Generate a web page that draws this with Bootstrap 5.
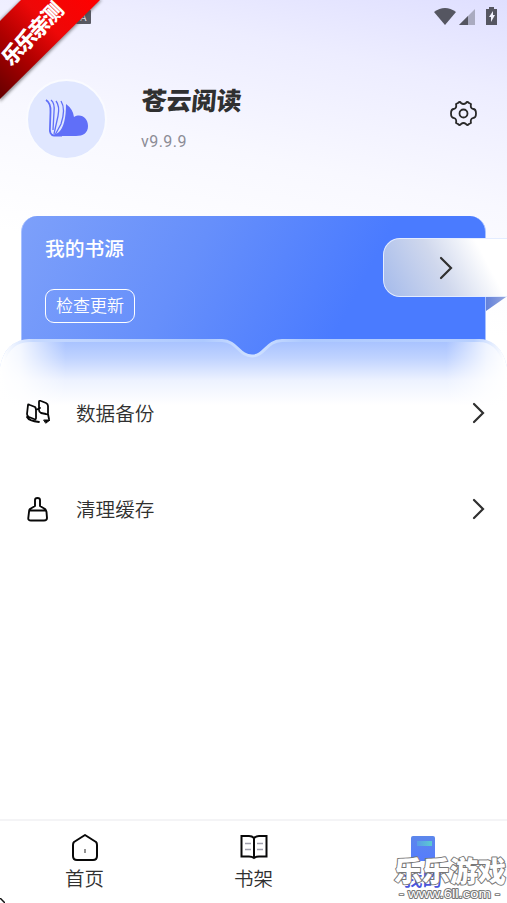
<!DOCTYPE html>
<html lang="zh-CN">
<head>
<meta charset="utf-8">
<meta name="viewport" content="width=device-width, initial-scale=1">
<title>苍云阅读</title>
<link href="https://cdn.jsdelivr.net/npm/bootstrap@5.3.0/dist/css/bootstrap.min.css" rel="stylesheet">
<style>
body{font-family:Roboto,"Noto Sans CJK SC",sans-serif;color:#303030;background:#fff}
svg{display:block;flex:none}
.phone{width:507px;height:903px;background:linear-gradient(192deg,#dfdfff 0,#ededff 90px,#f8f8ff 205px,#fff 330px)}
.status{height:33px;padding:7px 8px 0 0}
.profile{height:183px;padding:46px 30px 0 26px}
.avatar{width:81px;height:81px;background:#e0e7ff;border:2px solid #fafbff}
.names{margin-left:34px;padding-top:6px}
.app-name{font-size:25px;line-height:34px;font-weight:900;transform:skewX(-5deg);transform-origin:left bottom;margin-left:-1px}
.version{font-size:16px;line-height:20px;color:#8c8c96;margin-top:13px;letter-spacing:.45px}
.gear{margin-top:21px}
.source-card{height:140px;margin:0 21px;padding:19px 0 0 23px;border-radius:16px 16px 0 0;background:linear-gradient(118deg,#7da0fa 0,#668ffb 36%,#4a7bff 70%);border:1px solid #a9c2ff;border-top:0;border-bottom:0}
.source-title{font-size:19.8px;line-height:30px;font-weight:500;color:#fff}
.update{width:90px;height:34px;padding:0;margin-top:24px;border:1px solid #fff;border-radius:9px;color:#fff;font-size:17px;font-weight:350;line-height:31px}
.enter{left:383px;top:22px;width:124px;height:59px;border:1px solid #e3ecff;border-right:0;border-radius:17px 0 0 17px;background:linear-gradient(62deg,#a4baeb 0,#d0d8ed 45%,#fff 79%);padding-left:55px}
.fold{left:486px;top:81px}
.wave{left:0;top:119px}
.entries{padding-top:9px;z-index:1}
.entry{height:96px;padding:0 22px 0 25px;font-size:19.6px;font-weight:350}
.entry-label{margin-left:25px;padding-top:3px}
.tabs{height:84px;border-top:2px solid #f4f4f6;padding-top:11px}
.tab-item{width:169px;font-size:19.5px;font-weight:350;line-height:28px}
.tab-item svg{margin-top:1px;margin-bottom:5px}
.tab-item.active-tab{color:#4856dc;font-weight:500}
.ribbon{left:0;top:0}
.site-mark{left:388px;top:850px}
.corner{left:0;top:898px}
</style>
</head>
<body>
<main class="phone position-relative overflow-hidden d-flex flex-column">
  <div class="status d-flex justify-content-end">
    <svg width="65" height="20" viewBox="0 0 65 20"><path d="M0 5Q11-3 22 5L11 18Z" fill="#555661"/><path d="M41 2V18H25Z" fill="#aaabc0"/><path d="M34 9V18H25Z" fill="#555661"/><path d="M55 0h5v2h3v16H52V2h3Z" fill="#555661"/><path d="M59 4l-4 6h2v5l4-7h-2Z" fill="#f3f3ff"/></svg>
  </div>
  <header class="profile d-flex">
    <div class="avatar rounded-circle d-flex">
      <svg width="76" height="76" viewBox="28 81 76 76"><path d="M66 104Q73 109 74 117C81 113 88 118 88 126C88 133 83 136 76 136H53L59 132Q66 125 66 104Z" fill="#606ff8"/><g fill="none" stroke="#606ff8"><path d="M46 100Q51 103 50.500 112L50 127Q49 135 54 135.500H62" stroke-width="1.800"/><path d="M51 100Q55 103 54 112L53 130M56 101Q60 106 58 116L54 134M61 101Q66 109 61 124L55 135" stroke-width="1.300"/></g></svg>
    </div>
    <div class="names">
      <div class="app-name">苍云阅读</div>
      <div class="version">v9.9.9</div>
    </div>
    <svg class="gear ms-auto" width="27" height="27" viewBox="0 0 27 27" fill="none" stroke="#292929" stroke-width="1.800" stroke-linejoin="round"><path d="M8 3Q10 1 11 3Q13.500 5 16 3Q17 1 19 3L21 4Q20 8 23 9Q26 9 26 13.500Q26 18 23 18Q20 19 21 23L19 24Q17 26 16 24Q13.500 22 11 24Q10 26 8 24L6 23Q7 19 4 18Q1 18 1 13.500Q1 9 4 9Q7 8 6 4Z"/><circle cx="13.500" cy="13.500" r="4"/></svg>
  </header>
  <section class="source-wrap position-relative">
    <div class="source-card">
      <div class="source-title">我的书源</div>
      <button class="update btn">检查更新</button>
    </div>
    <svg class="fold position-absolute" width="21" height="15" viewBox="0 0 21 15"><defs><linearGradient id="foldTint"><stop stop-color="#6381da"/><stop offset="1" stop-color="#95a6dd"/></linearGradient></defs><path d="M0 0H20L0 14Z" fill="url(#foldTint)"/></svg>
    <div class="enter position-absolute d-flex align-items-center"><svg width="14" height="24" viewBox="0 0 14 24" fill="none" stroke="#303030" stroke-width="2.200" stroke-linecap="round"><path d="M2 2L12 12L2 22"/></svg></div>
    <svg class="wave position-absolute" width="507" height="70" viewBox="0 0 507 70">
      <defs>
        <linearGradient id="haze" x2="0" y2="1"><stop stop-color="#a6c1ff"/><stop offset=".28" stop-color="#c0d3ff"/><stop offset=".62" stop-color="#edf2ff"/><stop offset="1" stop-color="#fff"/></linearGradient>
        <linearGradient id="sides"><stop stop-color="#fff"/><stop offset=".04" stop-color="#fff" stop-opacity=".85"/><stop offset=".13" stop-color="#fff" stop-opacity="0"/><stop offset=".88" stop-color="#fff" stop-opacity="0"/><stop offset=".96" stop-color="#fff" stop-opacity=".8"/><stop offset="1" stop-color="#fff"/></linearGradient>
        <linearGradient id="rim"><stop stop-color="#fff"/><stop offset=".06" stop-color="#c6d9ff"/><stop offset=".4" stop-color="#adc9ff"/><stop offset=".5" stop-color="#d1e2ff"/><stop offset=".6" stop-color="#adc9ff"/><stop offset=".94" stop-color="#b8d0ff"/><stop offset="1" stop-color="#fff"/></linearGradient>
      </defs>
      <path d="M0 32Q5 5 29 5H222C237 5 239 21 252 21C265 21 266 5 282 5H479Q501 5 507 32V70H0Z" fill="url(#haze)"/>
      <path d="M0 32Q5 5 29 5H222C237 5 239 21 252 21C265 21 266 5 282 5H479Q501 5 507 32V70H0Z" fill="url(#sides)"/>
      <path d="M3 27Q10 6 29 5.500H222C237 6 239 21 252 21C265 21 266 6 282 5.500H479Q497 5.500 504 27" fill="none" stroke="url(#rim)" stroke-width="3"/>
    </svg>
  </section>
  <section class="entries position-relative">
    <div class="entry d-flex align-items-center">
      <svg width="26" height="26" viewBox="25 401 26 26" fill="none" stroke="#080808" stroke-width="1.800" stroke-linejoin="round" stroke-linecap="round"><path d="M28 406Q28 405 30 406L35 408Q36 409 36 411V419Q36 421 34 420L29 418Q27 417 27 415ZM39 403Q39 401 41 402L46 404Q48 405 48 407V414Q48 416 46 415L41 414Q39 413 39 411ZM36 411L40 409M27 418Q29 422 39 423M48 415L49 420"/><path d="M44 421H50L46 424Z" fill="#080808" stroke-width="1"/></svg>
      <span class="entry-label">数据备份</span>
      <svg class="ms-auto" width="14" height="24" viewBox="0 0 14 24" fill="none" stroke="#303030" stroke-width="2.200" stroke-linecap="round"><path d="M3 3L12 12L3 21"/></svg>
    </div>
    <div class="entry d-flex align-items-center">
      <svg width="26" height="26" viewBox="25 496 26 26" fill="none" stroke="#080808" stroke-width="1.900" stroke-linejoin="round"><path d="M35 506V500Q35 498 37.500 498Q40 498 40 500V506L45 509Q46 510 46.500 512L47 518Q47 520.500 44 520.500H31Q28 520.500 28.300 518L29 512Q29 510 30 509ZM29 510.500H46"/></svg>
      <span class="entry-label">清理缓存</span>
      <svg class="ms-auto" width="14" height="24" viewBox="0 0 14 24" fill="none" stroke="#303030" stroke-width="2.200" stroke-linecap="round"><path d="M3 3L12 12L3 21"/></svg>
    </div>
  </section>
  <nav class="tabs mt-auto d-flex">
    <div class="tab-item d-flex flex-column align-items-center">
      <svg width="28" height="28" viewBox="0 0 28 28" fill="none" stroke="#080808" stroke-width="2" stroke-linejoin="round"><path d="M14 2L25 9Q26 10 26 12V23Q26 27 22 27H6Q2 27 2 23V12Q2 10 3 9Z"/><path d="M14 16V20" stroke="#777" stroke-width="1.600"/></svg>首页
    </div>
    <div class="tab-item d-flex flex-column align-items-center">
      <svg width="28" height="28" viewBox="0 0 28 28" fill="none" stroke="#080808" stroke-width="2"><path d="M14 5Q12 3 9 3H1.500V23.500H9Q12 23.500 14 25Q16 23.500 19 23.500H26.500V3H19Q16 3 14 5V25"/><path d="M5 10.500H11M5 16.500H11M17 10.500H23M17 16.500H23" stroke="#a0a0ad" stroke-width="1.500"/></svg>书架
    </div>
    <div class="tab-item active-tab d-flex flex-column align-items-center">
      <svg width="28" height="28" viewBox="0 0 28 28"><defs><linearGradient id="book" x2="0" y2="1"><stop stop-color="#5c87eb"/><stop offset="1" stop-color="#557bff"/></linearGradient><linearGradient id="mint"><stop stop-color="#5a9ce8"/><stop offset="1" stop-color="#5bcbd0"/></linearGradient></defs><rect x="2" y="3" width="24" height="27" rx="2" fill="url(#book)"/><rect x="8" y="8" width="15" height="5" fill="url(#mint)"/></svg>我的
    </div>
  </nav>
  <svg class="ribbon position-absolute" width="112" height="108" viewBox="0 0 112 108">
    <defs><linearGradient id="red" x1="0" y1="1" x2="1" y2="0"><stop stop-color="#650000"/><stop offset=".35" stop-color="#b00000"/><stop offset=".62" stop-color="#ee0808"/><stop offset="1" stop-color="#f00"/></linearGradient><filter id="shade" x="-20%" y="-20%" width="140%" height="140%"><feGaussianBlur stdDeviation="1.500"/></filter></defs>
    <rect x="76" y="10" width="15" height="14" rx="1" fill="#595963"/><text x="80" y="21" font-family="Roboto" font-size="10" fill="#eef">A</text>
    <path d="M21 0H102L0 102V20Z" fill="#444" opacity=".55" filter="url(#shade)"/>
    <path d="M21 0H100L0 99V21Z" fill="url(#red)"/>
    <text transform="translate(11 67) rotate(-46)" font-family="Noto Sans CJK SC" font-size="21" font-weight="900" fill="#fff" textLength="78">乐乐亲测</text>
  </svg>
  <svg class="site-mark position-absolute" width="119" height="53" viewBox="0 0 119 53" fill="#fff" stroke="#777" paint-order="stroke" stroke-linejoin="round">
    <text x="6" y="32" font-family="Noto Sans CJK SC" font-size="28" font-weight="900" stroke-width="2" textLength="112">乐乐游戏</text>
    <text x="11" y="48" font-family="Liberation Sans" font-size="12.500" stroke-width="1.800" textLength="101" lengthAdjust="spacingAndGlyphs">- www.6ll.com -</text>
  </svg>
  <svg class="corner position-absolute" width="5" height="5" viewBox="0 0 5 5"><path d="M0 0L5 5" stroke="#111" stroke-width="1.500"/></svg>
</main>
<script src="https://cdn.jsdelivr.net/npm/bootstrap@5.3.0/dist/js/bootstrap.bundle.min.js"></script>
</body>
</html>
